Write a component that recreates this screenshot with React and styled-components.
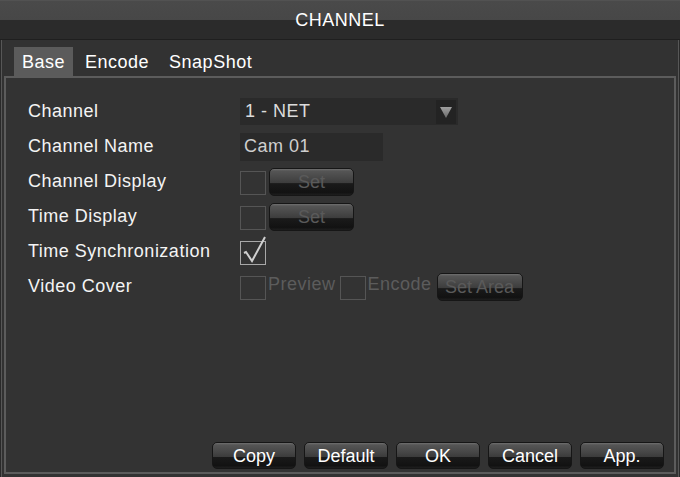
import styled, { createGlobalStyle } from "styled-components";

const GlobalStyle = createGlobalStyle`
  html, body {
    margin: 0;
    padding: 0;
    background: #333;
  }
  body {
    font-family: "Liberation Sans", Arial, sans-serif;
  }
`;

const Window = styled.div`
  width: 680px;
  height: 477px;
  display: flex;
  flex-direction: column;
  background: #333;
  color: #f2f2f2;
  overflow: hidden;
`;

const TitleBar = styled.header`
  flex: none;
  height: 39px;
  border-bottom: 1px solid #1f1f1f;
  background: linear-gradient(
    to bottom,
    #5a5a5a 0,
    #4a4a4a 1px,
    #474747 20px,
    #2b2b2b 20px,
    #2b2b2b 100%
  );
  text-align: center;
  line-height: 40px;
  font-size: 18px;
  letter-spacing: 0.5px;
  color: #fff;
`;

const Frame = styled.div`
  flex: 1;
  display: flex;
  flex-direction: column;
  padding: 0 4px 3px 4px;
  background: #323232;
  box-shadow: inset 1px 0 #2a2a2a, inset -1px 0 #2a2a2a, inset 2px 0 #575757,
    inset -2px 0 #575757;
`;

const Tabs = styled.nav`
  flex: none;
  height: 36px;
  display: flex;
  align-items: flex-end;
  padding-left: 10px;
`;

const Tab = styled.div`
  height: 29px;
  line-height: 30px;
  padding: 0 8px;
  margin-right: 4px;
  font-size: 18px;
  letter-spacing: 0.5px;
  color: #fff;
  background: ${(p) => (p.$active ? "#5b5b5b" : "transparent")};
`;

const Panel = styled.section`
  flex: 1;
  display: flex;
  flex-direction: column;
  border: 2px solid #5c5c5c;
  background: #333;
  padding: 16px 0 3px;
`;

const Form = styled.div`
  flex: 1;
  display: grid;
  grid-template-columns: 212px 1fr;
  grid-auto-rows: 35px;
  align-content: start;
  padding-left: 22px;
`;

const Label = styled.div`
  align-self: center;
  padding-bottom: 1px;
  font-size: 18px;
  letter-spacing: 0.5px;
  color: #f4f4f4;
  white-space: nowrap;
`;

const Control = styled.div`
  display: flex;
  align-items: center;
  gap: ${(p) => p.$gap || 0}px;
`;

const Select = styled.div`
  width: 218px;
  height: 27px;
  box-sizing: border-box;
  display: flex;
  align-items: center;
  justify-content: space-between;
  padding: 0 2px 0 5px;
  background: #2a2a2a;
  font-size: 18px;
  letter-spacing: 0.5px;
  color: #dcdcdc;
`;

const Arrow = styled.div`
  width: 20px;
  height: 24px;
  display: flex;
  align-items: center;
  justify-content: center;
  background: #232323;
  padding-top: 2px;
  box-sizing: border-box;
`;

const Input = styled.div`
  width: 143px;
  height: 28px;
  box-sizing: border-box;
  display: flex;
  align-items: center;
  padding-left: 4px;
  background: #2a2a2a;
  font-size: 18px;
  letter-spacing: 0.5px;
  color: #cfcfcf;
`;

const Check = styled.div`
  position: relative;
  flex: none;
  width: 24px;
  height: 22px;
  border: 1px solid ${(p) => (p.$checked ? "#a8a8a8" : "#555")};
  margin-top: 2px;
`;

const Tick = styled.svg`
  position: absolute;
  left: 0;
  top: -6px;
  overflow: visible;
`;

const Muted = styled.span`
  font-size: 18px;
  letter-spacing: 0.5px;
  color: #5c5c5c;
  margin-bottom: 5px;
  padding: 0 ${(p) => p.$pr || 0}px 0 2px;
`;

const Button = styled.button`
  width: ${(p) => p.$w || 84}px;
  height: ${(p) => p.$h || 27}px;
  padding: 0;
  border: 1px solid #161616;
  border-radius: 5px;
  background: linear-gradient(
    to bottom,
    #707070 0,
    #555 2px,
    #474747 35%,
    #3c3c3c 54%,
    #1a1a1a 56%,
    #121212 90%,
    #1e1e1e 100%
  );
  font-family: "Liberation Sans", Arial, sans-serif;
  font-size: 18px;
  color: ${(p) => (p.$disabled ? "#5a5a5a" : "#fff")};
  line-height: 1;
  cursor: default;
`;

const Footer = styled.footer`
  display: flex;
  justify-content: flex-end;
  gap: 8px;
  padding-right: 10px;
`;

function Checkbox({ checked }) {
  return (
    <Check $checked={checked}>
      {checked && (
        <Tick width="26" height="30" viewBox="0 0 26 30">
          <polyline
            points="3,17 5,16 11,25 24,1"
            fill="none"
            stroke="#cfcfcf"
            strokeWidth="2"
          />
        </Tick>
      )}
    </Check>
  );
}

export default function App() {
  return (
    <Window>
      <GlobalStyle />
      <TitleBar>CHANNEL</TitleBar>
      <Frame>
        <Tabs>
          <Tab $active>Base</Tab>
          <Tab>Encode</Tab>
          <Tab>SnapShot</Tab>
        </Tabs>
        <Panel>
          <Form>
            <Label>Channel</Label>
            <Control>
              <Select>
                <span>1 - NET</span>
                <Arrow>
                  <svg width="12" height="11" viewBox="0 0 12 11">
                    <defs>
                      <linearGradient id="tri" x1="0" y1="0" x2="0" y2="1">
                        <stop offset="0" stopColor="#a0a0a0" />
                        <stop offset="1" stopColor="#6a6a6a" />
                      </linearGradient>
                    </defs>
                    <polygon points="0,0 12,0 6,11" fill="url(#tri)" />
                  </svg>
                </Arrow>
              </Select>
            </Control>

            <Label>Channel Name</Label>
            <Control>
              <Input>Cam 01</Input>
            </Control>

            <Label>Channel Display</Label>
            <Control $gap={3}>
              <Checkbox />
              <Button $w={85} $h={28} $disabled>
                Set
              </Button>
            </Control>

            <Label>Time Display</Label>
            <Control $gap={3}>
              <Checkbox />
              <Button $w={85} $h={28} $disabled>
                Set
              </Button>
            </Control>

            <Label>Time Synchronization</Label>
            <Control>
              <Checkbox checked />
            </Control>

            <Label>Video Cover</Label>
            <Control>
              <Checkbox />
              <Muted $pr={4}>Preview</Muted>
              <Checkbox />
              <Muted $pr={5}>Encode</Muted>
              <Button $w={86} $h={28} $disabled>
                Set Area
              </Button>
            </Control>
          </Form>
          <Footer>
            <Button>Copy</Button>
            <Button>Default</Button>
            <Button>OK</Button>
            <Button>Cancel</Button>
            <Button>App.</Button>
          </Footer>
        </Panel>
      </Frame>
    </Window>
  );
}
